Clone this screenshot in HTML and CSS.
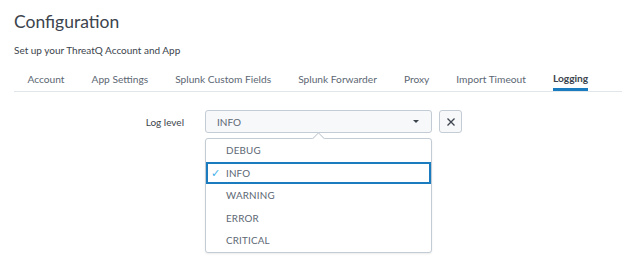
FILE: index.html
```html
<!DOCTYPE html>
<html>
<head>
<meta charset="utf-8">
<link rel="stylesheet" href="styles.css">
</head>
<body>
<div class="page">
  <h1 class="title">Configuration</h1>
  <p class="subtitle">Set up your ThreatQ Account and App</p>
  <nav class="tabs">
    <span class="tab">Account</span>
    <span class="tab">App Settings</span>
    <span class="tab">Splunk Custom Fields</span>
    <span class="tab">Splunk Forwarder</span>
    <span class="tab">Proxy</span>
    <span class="tab">Import Timeout</span>
    <span class="tab active">Logging</span>
  </nav>
  <div class="form-row">
    <label class="label">Log level</label>
    <div class="select-wrap">
      <div class="select">
        <span>INFO</span>
        <span class="caret"></span>
      </div>
      <div class="popup">
        <div class="arrow"></div>
        <div class="item">DEBUG</div>
        <div class="item selected"><span class="check">&#10003;</span>INFO</div>
        <div class="item">WARNING</div>
        <div class="item">ERROR</div>
        <div class="item">CRITICAL</div>
      </div>
    </div>
    <button class="clear">
      <svg width="10" height="10" viewBox="0 0 10 10"><path d="M1.5 1.5L8.5 8.5M8.5 1.5L1.5 8.5" stroke="#3c444d" stroke-width="1.3" fill="none"/></svg>
    </button>
  </div>
</div>
</body>
</html>
```

FILE: styles.css
```css
* { box-sizing: border-box; }
html, body { margin: 0; padding: 0; background: #fff; min-height: 100vh; }
body { font-family: Lato, "Open Sans", sans-serif; color: #3c444d; }
.page { padding: 0 0 0 14px; min-height: 262px; }
.title {
  margin: 0;
  padding-top: 10px;
  font-size: 17.5px;
  line-height: 24px;
  font-weight: 400;
  color: #3c444d;
}
.subtitle {
  margin: 9px 0 0;
  font-size: 10px;
  line-height: 14px;
  color: #3c444d;
}
.tabs {
  display: flex;
  margin-top: 11px;
  border-bottom: 1px solid #e1e6eb;
  height: 24px;
}
.tab {
  margin: 0 13.5px;
  font-size: 10.2px;
  height: 23px;
  line-height: 23px;
  color: #5c6773;
  white-space: nowrap;
}
.tab.active {
  color: #3c444d;
  font-weight: 700;
  border-bottom: 3px solid #1a7bbf;
  line-height: 21px;
}
.form-row {
  display: flex;
  align-items: center;
  margin-top: 18px;
}
.label {
  width: 170px;
  text-align: right;
  font-size: 10px;
  color: #3c444d;
  margin-right: 21px;
}
.select-wrap { position: relative; }
.select {
  width: 227px;
  height: 23px;
  border: 1px solid #c3cbd4;
  border-radius: 3px;
  background: #f7f8fa;
  display: flex;
  align-items: center;
  justify-content: space-between;
  padding: 0 12px 0 11px;
  font-size: 10px;
  color: #5c6773;
}
.caret {
  width: 0; height: 0;
  border-left: 3px solid transparent;
  border-right: 3px solid transparent;
  border-top: 3.5px solid #3c444d;
}
.clear {
  margin-left: 7px;
  width: 23px;
  height: 23px;
  border: 1px solid #c3cbd4;
  border-radius: 3px;
  background: #f7f8fa;
  padding: 0;
  display: flex;
  align-items: center;
  justify-content: center;
}
.popup {
  position: absolute;
  top: 28px;
  left: 0;
  z-index: 5;
  width: 227px;
  background: #fff;
  border: 1px solid #c3cbd4;
  border-radius: 3px;
  box-shadow: 0 1px 2px rgba(0,0,0,0.08);
  padding: 0;
}
.arrow {
  position: absolute;
  top: -5px;
  left: 108px;
  width: 9px;
  height: 9px;
  background: #fff;
  border-left: 1px solid #c3cbd4;
  border-top: 1px solid #c3cbd4;
  transform: rotate(45deg);
}
.item {
  position: relative;
  height: 22.6px;
  line-height: 22.6px;
  padding-left: 20px;
  font-size: 9.8px;
  color: #5c6773;
  letter-spacing: 0.2px;
}
.item.selected {
  border: 2px solid #1a7bbf;
  padding-left: 18px;
  line-height: 18.6px;
}
.check {
  position: absolute;
  left: 3px;
  color: #43b1ea;
  font-size: 11px;
}
```
